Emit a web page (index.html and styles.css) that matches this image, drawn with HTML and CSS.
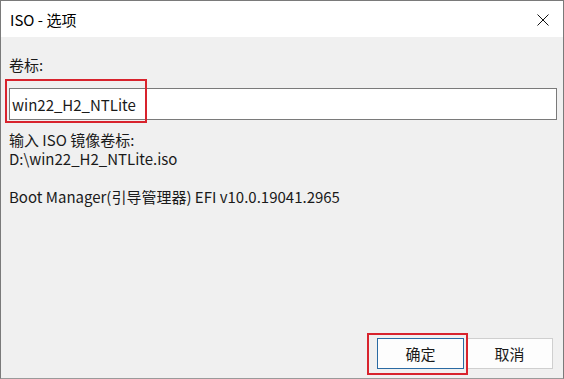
FILE: index.html
```html
<!DOCTYPE html>
<html lang="zh-CN">
<head>
    <meta charset="UTF-8">
    <title>ISO - 选项</title>
    <link rel="stylesheet" href="styles.css">
</head>
<body>
    <div class="window">
        <div class="titlebar">
            <span class="title">ISO - 选项</span>
            <svg class="close" width="12" height="12" viewBox="0 0 12 12">
                <path d="M0.5 0.5 L11.5 11.5 M11.5 0.5 L0.5 11.5" stroke="#111" stroke-width="1" fill="none"/>
            </svg>
        </div>

        <div class="content">
            <div class="label">卷标:</div>
            <input class="textbox" type="text" value="win22_H2_NTLite">
            <div class="info">
                <div>输入 ISO 镜像卷标:</div>
                <div>D:\win22_H2_NTLite.iso</div>
                <div class="gap"></div>
                <div>Boot Manager(引导管理器) EFI v10.0.19041.2965</div>
            </div>
        </div>

        <div class="footer">
            <button class="btn btn-default">确定</button>
            <button class="btn">取消</button>
        </div>

        <!-- annotation boxes drawn over the dialog -->
        <div class="mark mark-label"></div>
        <div class="mark mark-ok"></div>
    </div>
</body>
</html>
```

FILE: styles.css
```css
body {
    margin: 0;
    font-family: "Noto Sans CJK SC", sans-serif;
    font-size: 15px;
    color: #1a1a1a;
}
.window {
    position: relative;
    width: 564px;
    height: 379px;
    box-sizing: border-box;
    border: 1px solid #7a7a7a;
    border-bottom-color: #9a9a9a;
    background-color: #f0f0f0;
    display: flex;
    flex-direction: column;
}
.titlebar {
    height: 36px;
    background-color: #fff;
    display: flex;
    align-items: center;
    justify-content: space-between;
    padding: 0 14px 0 9px;
}
.title {
    font-size: 15px;
    color: #000;
    line-height: 20px;
    padding-top: 2px;
}
.close {
    display: block;
    margin-top: 2px;
}
.content {
    padding: 18px 6px 0 8px;
}
.label {
    line-height: 19px;
    margin-bottom: 14px;
}
.textbox {
    display: block;
    width: 100%;
    box-sizing: border-box;
    height: 32px;
    margin: 0;
    padding: 0 2px;
    border: 1px solid #7a7a7a;
    background-color: #fff;
    font-family: inherit;
    font-size: 15px;
    color: #1a1a1a;
    outline: none;
}
.info {
    margin-top: 10px;
    line-height: 19px;
}
.gap {
    height: 19px;
}
.footer {
    margin-top: auto;
    display: flex;
    justify-content: flex-end;
    gap: 2px;
    padding: 0 10px 9px 0;
}
.btn {
    width: 87px;
    height: 31px;
    box-sizing: border-box;
    border: 1px solid #cfcfcf;
    background-color: #fdfdfd;
    font-family: inherit;
    font-size: 15px;
    color: #1a1a1a;
    padding: 0;
}
.btn-default {
    border-color: #2a6aa3;
}
.mark {
    position: absolute;
    border: 2px solid #d8232d;
    box-sizing: border-box;
}
.mark-label {
    left: 4px;
    top: 78px;
    width: 142px;
    height: 44px;
}
.mark-ok {
    left: 366px;
    top: 332px;
    width: 101px;
    height: 42px;
}
```
